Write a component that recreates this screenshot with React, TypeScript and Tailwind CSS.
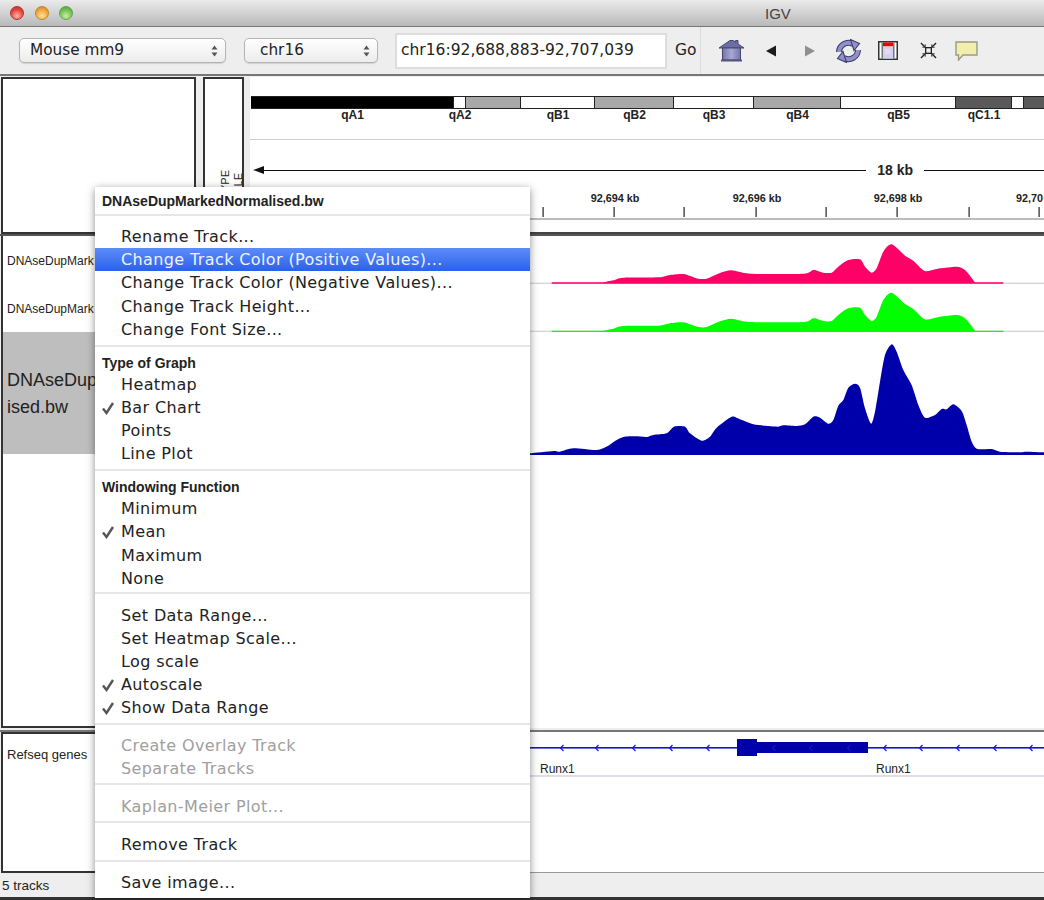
import React from 'react';

const LUCIDA = 'font-["DejaVu_Sans",sans-serif]';
const ARIAL = 'font-["Liberation_Sans",Arial,sans-serif]';

// coverage curves, traced in 3x coordinates of the track area
const peakCurve: number[][] = [
  [250, 142], [280, 136], [310, 128], [415, 127], [450, 120], [490, 117], [510, 123], [535, 131], [560, 131], [600, 114], [635, 106], [690, 116], [850, 116], [880, 105], [910, 113], [935, 113], [955, 95], [985, 75], [1020, 73], [1035, 95], [1055, 113], [1070, 100], [1090, 50], [1115, 28], [1155, 62], [1180, 77], [1215, 108], [1260, 100], [1310, 95], [1335, 105], [1365, 142],
];
const blueCurve: number[][] = [
  [30, 655], [100, 648], [120, 650], [160, 640], [230, 645], [265, 632], [285, 618], [310, 606], [345, 604], [380, 606], [400, 600], [440, 595], [462, 575], [495, 575], [510, 595], [545, 617], [570, 605], [590, 578], [635, 545], [660, 553], [700, 568], [745, 573], [775, 575], [790, 571], [830, 573], [855, 568], [880, 545], [900, 548], [925, 566], [940, 555], [955, 512], [970, 495], [985, 458], [1005, 446], [1020, 458], [1035, 520], [1053, 566], [1065, 530], [1080, 440], [1095, 360], [1115, 328], [1130, 350], [1150, 405], [1175, 450], [1195, 510], [1215, 548], [1245, 540], [1265, 522], [1280, 523], [1300, 508], [1325, 528], [1340, 570], [1355, 620], [1372, 642], [1415, 642], [1440, 650], [1500, 652], [1520, 650], [1572, 652],
];

// smooth line through the traced points
function smooth(pts: number[][]) {
  let d = `L${pts[0][0]} ${pts[0][1]}`;
  for (let i = 0; i < pts.length - 1; i++) {
    const p0 = pts[Math.max(i - 1, 0)];
    const p1 = pts[i];
    const p2 = pts[i + 1];
    const p3 = pts[Math.min(i + 2, pts.length - 1)];
    const c1x = p1[0] + (p2[0] - p0[0]) / 8;
    const c1y = p1[1] + (p2[1] - p0[1]) / 8;
    const c2x = p2[0] - (p3[0] - p1[0]) / 8;
    const c2y = p2[1] - (p3[1] - p1[1]) / 8;
    d += ` C${c1x} ${c1y} ${c2x} ${c2y} ${p2[0]} ${p2[1]}`;
  }
  return d;
}

const peakPath = `M95 146 L95 142 ${smooth(peakCurve)} L1450 142 L1450 146 Z`;
const bluePath = `M30 660 ${smooth(blueCurve)} L1572 660 Z`;

const bands = [
  { w: 'w-[203px]', bg: 'bg-black', label: 'qA1' },
  { w: 'w-[12px]', bg: 'bg-white', label: 'qA2' },
  { w: 'w-[55px]', bg: 'bg-[#a8a8a8]', label: '' },
  { w: 'w-[74px]', bg: 'bg-white', label: 'qB1' },
  { w: 'w-[79px]', bg: 'bg-[#a8a8a8]', label: 'qB2' },
  { w: 'w-[80px]', bg: 'bg-white', label: 'qB3' },
  { w: 'w-[87px]', bg: 'bg-[#a8a8a8]', label: 'qB4' },
  { w: 'w-[115px]', bg: 'bg-white', label: 'qB5' },
  { w: 'w-[56px]', bg: 'bg-[#595959]', label: 'qC1.1' },
  { w: 'w-[12px]', bg: 'bg-white', label: '' },
  { w: 'w-[21px]', bg: 'bg-[#595959]', label: '' },
];

type Item = { text: string; checked?: boolean; active?: boolean; disabled?: boolean };
type Section = { cls: string; headerCls?: string; header?: string; items: Item[] };

const sections: Section[] = [
  {
    cls: 'pt-[8.5px] pb-[4.5px]',
    items: [
      { text: 'Rename Track...' },
      { text: 'Change Track Color (Positive Values)...', active: true },
      { text: 'Change Track Color (Negative Values)...' },
      { text: 'Change Track Height...' },
      { text: 'Change Font Size...' },
    ],
  },
  {
    cls: 'pt-[6px] pb-[4px]',
    headerCls: 'h-[19px]',
    header: 'Type of Graph',
    items: [{ text: 'Heatmap' }, { text: 'Bar Chart', checked: true }, { text: 'Points' }, { text: 'Line Plot' }],
  },
  {
    cls: 'pt-[6px] pb-[3px]',
    headerCls: 'h-[20px]',
    header: 'Windowing Function',
    items: [{ text: 'Minimum' }, { text: 'Mean', checked: true }, { text: 'Maximum' }, { text: 'None' }],
  },
  {
    cls: 'pt-[8.5px] pb-[4.5px]',
    items: [
      { text: 'Set Data Range...' },
      { text: 'Set Heatmap Scale...' },
      { text: 'Log scale' },
      { text: 'Autoscale', checked: true },
      { text: 'Show Data Range', checked: true },
    ],
  },
  {
    cls: 'pt-[8px] pb-[3.5px]',
    items: [
      { text: 'Create Overlay Track', disabled: true },
      { text: 'Separate Tracks', disabled: true },
    ],
  },
  { cls: 'pt-[9px] pb-[3.5px]', items: [{ text: 'Kaplan-Meier Plot...', disabled: true }] },
  { cls: 'pt-[9px] pb-[4.5px]', items: [{ text: 'Remove Track' }] },
  { cls: 'pt-[8.5px] pb-[4.5px]', items: [{ text: 'Save image...' }] },
];

function Stepper() {
  return (
    <svg width="7" height="12" viewBox="0 0 7 12" className="shrink-0">
      <path d="M3.5 0.5 L6.5 4.5 H0.5 Z M3.5 11.5 L0.5 7.5 H6.5 Z" fill="#555" />
    </svg>
  );
}

function Select({ cls, label }: { cls: string; label: string }) {
  return (
    <div className={`${cls} h-[25px] flex items-center justify-between rounded-[5px] border border-[#b4b4b4] bg-gradient-to-b from-white to-[#ececec] shadow-[0_1px_1px_rgba(0,0,0,0.12)] text-[15.3px] text-[#222]`}>
      <span>{label}</span>
      <Stepper />
    </div>
  );
}

function ToolbarIcons() {
  return (
    <div className="flex items-center ml-[17px] gap-[15px]">
      <svg width="27" height="23" viewBox="0 0 27 23">
        <defs>
          <linearGradient id="houseBody" x1="0" y1="0" x2="1" y2="0">
            <stop offset="0" stopColor="#7474ac" />
            <stop offset="0.5" stopColor="#a8a8d4" />
            <stop offset="1" stopColor="#7474ac" />
          </linearGradient>
        </defs>
        <path d="M1 9 L12 1.5 H15 L17.5 3 V1.5 H20 V5 L26 9 Z" fill="#6d6da6" stroke="#46466e" />
        <rect x="4.5" y="9" width="18" height="12" fill="url(#houseBody)" stroke="#46466e" />
        <rect x="3" y="20.5" width="21" height="2" fill="#55557f" />
      </svg>
      <svg width="24" height="24" viewBox="0 0 24 24" className="-ml-[1px]">
        <path d="M7 12 L17 6.5 V17.5 Z" fill="#1c1c1c" />
      </svg>
      <svg width="24" height="24" viewBox="0 0 24 24">
        <path d="M17 12 L7 6.5 V17.5 Z" fill="#8f8f8f" />
      </svg>
      <svg width="27" height="24" viewBox="0 0 27 24" className="-ml-[2px]">
        <g>
          <path d="M4 13 A9.5 9.5 0 0 1 18 5" fill="none" stroke="#3c3c64" strokeWidth="6" />
          <path d="M4 13 A9.5 9.5 0 0 1 18 5" fill="none" stroke="#9090cc" strokeWidth="4" />
          <path d="M15.5 0.5 L24.5 4.5 L19 11.5 Z" fill="#9090cc" stroke="#3c3c64" strokeWidth="1.1" />
        </g>
        <g transform="rotate(180 13.5 12)">
          <path d="M4 13 A9.5 9.5 0 0 1 18 5" fill="none" stroke="#3c3c64" strokeWidth="6" />
          <path d="M4 13 A9.5 9.5 0 0 1 18 5" fill="none" stroke="#9090cc" strokeWidth="4" />
          <path d="M15.5 0.5 L24.5 4.5 L19 11.5 Z" fill="#9090cc" stroke="#3c3c64" strokeWidth="1.1" />
        </g>
      </svg>
      <svg width="20" height="19" viewBox="0 0 20 19" className="ml-[1px]">
        <rect x="0.75" y="0.75" width="18.5" height="17.5" fill="#ffffff" stroke="#333" strokeWidth="1.5" />
        <rect x="5" y="1.5" width="10" height="4" fill="#f00000" />
        <rect x="5" y="5.5" width="10" height="12" fill="#cfd2f2" />
        <rect x="7" y="8" width="5" height="5" fill="#f0d8e4" />
        <rect x="3.5" y="1.5" width="1.5" height="16" fill="#777" />
        <rect x="15" y="1.5" width="1.5" height="16" fill="#777" />
      </svg>
      <svg width="17" height="17" viewBox="0 0 18 18" className="ml-[7px]">
        <rect x="6" y="6" width="6" height="6" fill="none" stroke="#222" strokeWidth="1.4" />
        <path d="M1 1 L5 5 M17 1 L13 5 M1 17 L5 13 M17 17 L13 13" stroke="#222" strokeWidth="1.4" />
        <path d="M5.5 2.5 V5.5 H2.5 M12.5 2.5 V5.5 H15.5 M5.5 15.5 V12.5 H2.5 M12.5 15.5 V12.5 H15.5" stroke="#222" fill="none" />
      </svg>
      <svg width="23" height="20" viewBox="0 0 23 20" className="ml-[3px]">
        <path d="M1 1 H22 V14 H8 L3.5 19 V14 H1 Z" fill="#f2efae" stroke="#9a9a86" strokeWidth="1.4" />
      </svg>
    </div>
  );
}

function Area({ top, height, d, fill, dy = 0, baseline }: { top: number; height: number; d: string; fill: string; dy?: number; baseline: string }) {
  return (
    <svg width="794" height={height} viewBox={`-810 ${(top - 235) * 3} 2382 ${height * 3}`} className="block">
      <rect x="-810" y={(top - 235 + height) * 3 - 4} width="2382" height="4" fill={baseline} />
      <path d={d} fill={fill} transform={`translate(0 ${dy})`} />
    </svg>
  );
}

function Ruler() {
  const ticks = [543, 614, 684, 756, 826, 897, 969, 1039];
  const labels = [
    { x: 615, t: '92,694 kb' },
    { x: 757, t: '92,696 kb' },
    { x: 898, t: '92,698 kb' },
    { x: 1040, t: '92,70' },
  ];
  return (
    <svg width="794" height="32" viewBox="250 188 794 32" className="block">
      {labels.map((l) => (
        <text key={l.x} x={l.x} y="201.5" textAnchor={l.t.length > 5 ? 'middle' : 'start'} dx={l.t.length > 5 ? 0 : -24} fontFamily="Liberation Sans" fontWeight="700" fontSize="10.8" fill="#222">
          {l.t}
        </text>
      ))}
      {ticks.map((x) => (
        <rect key={x} x={x - 0.5} y="207" width="1.2" height="10" fill="#222" />
      ))}
      <rect x="250" y="218.5" width="794" height="1" fill="#777" />
    </svg>
  );
}

function GeneTrack() {
  const arrows = [562, 597, 634, 671, 708, 885, 921, 958, 995, 1031];
  const inner = [774, 811, 849];
  return (
    <svg width="794" height="50" viewBox="250 732 794 50" className="block">
      <rect x="250" y="747" width="794" height="1.6" fill="#1414cc" />
      {arrows.map((x) => (
        <path key={x} d={`M${x + 1.5} 745 L${x - 1.5} 748 L${x + 1.5} 751`} fill="none" stroke="#1414ee" strokeWidth="1.2" />
      ))}
      <rect x="737" y="739" width="20" height="17" fill="#0000aa" />
      <rect x="757" y="742" width="111" height="11" fill="#0000aa" />
      {inner.map((x) => (
        <path key={x} d={`M${x + 1.5} 745 L${x - 1.5} 748 L${x + 1.5} 751`} fill="none" stroke="#2222dd" strokeWidth="1" />
      ))}
      <text x="540" y="772.5" fontFamily="Liberation Sans" fontSize="12" fill="#222">Runx1</text>
      <text x="876" y="772.5" fontFamily="Liberation Sans" fontSize="12" fill="#222">Runx1</text>
    </svg>
  );
}

function PopupMenu() {
  return (
    <div className={`absolute left-[95px] top-[187px] w-[435px] h-[711px] bg-white shadow-[0_2px_8px_rgba(0,0,0,0.45)] ${LUCIDA}`}>
      <div className={`h-[27px] pt-[2px] flex items-center pl-[7px] text-[14px] font-bold text-[#222] ${ARIAL}`}>DNAseDupMarkedNormalised.bw</div>
      {sections.map((s, i) => (
        <div key={i} className={`border-t-2 border-[#e6e6e6] ${s.cls}`}>
          {s.header && <div className={`${s.headerCls} pt-[2px] flex items-center pl-[7px] text-[14px] font-bold text-[#222] ${ARIAL}`}>{s.header}</div>}
          {s.items.map((it) => (
            <div
              key={it.text}
              className={`relative h-[23.2px] pt-[2px] flex items-center pl-[26px] text-[16px] tracking-[0.38px] whitespace-nowrap ${
                it.active ? 'bg-gradient-to-b from-[#5c8cf7] to-[#2a60ee] text-[#eef3ff]' : it.disabled ? 'text-[#a0a0a0]' : 'text-[#222]'
              }`}
            >
              {it.checked && (
                <svg width="14" height="14" viewBox="0 0 14 14" className="absolute left-[6px]">
                  <path d="M2 7.5 L5.5 12 L12 2" fill="none" stroke="#555" strokeWidth="2.4" />
                </svg>
              )}
              {it.text}
            </div>
          ))}
        </div>
      ))}
    </div>
  );
}

export default function App() {
  return (
    <div className={`relative w-[1044px] h-[900px] overflow-hidden flex flex-col bg-[#eeeeee] ${ARIAL}`}>
      {/* window title */}
      <div className="relative h-[27px] pt-[2px] shrink-0 flex items-center pl-[765px] bg-gradient-to-b from-[#ebebeb] to-[#b9b9b9] border-b border-[#777] text-[15px] text-[#444]">
        <div className="absolute left-[10px] top-[6px] flex gap-[10.5px]">
          <div className="w-[14px] h-[14px] rounded-full border border-[#a33] bg-[radial-gradient(circle_at_50%_75%,#ffb0a0,#e2433c_60%,#b8302a)]" />
          <div className="w-[14px] h-[14px] rounded-full border border-[#b82] bg-[radial-gradient(circle_at_50%_75%,#ffe19a,#eda53a_60%,#c9852a)]" />
          <div className="w-[14px] h-[14px] rounded-full border border-[#5a5] bg-[radial-gradient(circle_at_50%_75%,#c8f0a0,#74bb50_60%,#4f9a3c)]" />
        </div>
        IGV
      </div>

      {/* toolbar */}
      <div className={`h-[49px] shrink-0 flex items-stretch border-b-2 border-[#777] ${LUCIDA}`}>
        <div className="flex items-center w-[701px] border-r border-[#dcdcdc]">
          <Select cls="ml-[19px] w-[207px] pl-[10px] pr-[7px]" label="Mouse mm9" />
          <Select cls="ml-[18px] w-[134px] pl-[15px] pr-[7px]" label="chr16" />
          <div className="ml-[17px] w-[272px] h-[36px] flex items-center pl-[4px] border-2 border-[#dddddd] bg-white text-[15.5px] text-[#222] whitespace-nowrap">chr16:92,688,883-92,707,039</div>
          <span className="ml-[8px] text-[15.5px] text-[#222]">Go</span>
        </div>
        <ToolbarIcons />
      </div>

      {/* header panel */}
      <div className="h-[157px] shrink-0 flex mt-px">
        <div className="ml-px w-[195px] border-2 border-[#333] bg-white" />
        <div className="ml-[7px] w-[41px] border-2 border-[#333] bg-white flex justify-end items-end gap-[2px] pb-[33px] overflow-hidden text-[11px] leading-none text-[#222]">
          <span className="[writing-mode:vertical-rl] rotate-180">TYPE</span>
          <span className="[writing-mode:vertical-rl] rotate-180 mb-[3px] mr-[-2px]">FILE</span>
        </div>
        <div className="ml-[6px] flex-1 bg-white flex flex-col border-b-2 border-[#444] overflow-hidden">
          <div className="mt-[19px] ml-px flex items-start">
            {bands.map((b, i) => (
              <div key={i} className={`${b.w} shrink-0 flex flex-col items-center`}>
                <div className={`w-full h-[13px] border-y border-[#222] border-r ${b.bg}`} />
                <span className="-mt-px h-[14px] text-[12px] leading-[14px] font-bold text-[#222] whitespace-nowrap">{b.label}</span>
              </div>
            ))}
          </div>
          <div className="mt-[17px] h-px bg-[#cfcfcf]" />
          <div className="mt-[20px] h-[20px] flex items-center pl-[3px]">
            <svg width="11" height="8" viewBox="0 0 11 8" className="shrink-0"><path d="M0 4 L11 0 V8 Z" fill="#111" /></svg>
            <div className="flex-1 h-px bg-[#111]" />
            <span className="mx-[11px] text-[14px] font-bold text-[#222]">18 kb</span>
            <div className="w-[120px] h-px bg-[#111]" />
          </div>
          <div className="mt-[8px]"><Ruler /></div>
        </div>
      </div>

      {/* data panel */}
      <div className="h-[494px] shrink-0 flex border-t-2 border-[#555]">
        <div className="ml-px w-[195px] border-x-2 border-b-2 border-[#333] bg-white flex flex-col text-[12px] text-[#222]">
          <div className="h-[48px] pt-[2px] flex items-center pl-[4px] whitespace-nowrap">DNAseDupMark</div>
          <div className="h-[48px] pt-[2px] flex items-center pl-[4px] whitespace-nowrap">DNAseDupMark</div>
          <div className="h-[122px] pt-[1px] flex flex-col justify-center pl-[4px] bg-[#bebebe] text-[18px] leading-[27px]">
            <span>DNAseDup</span>
            <span>ised.bw</span>
          </div>
        </div>
        <div className="ml-[7px] w-[41px] border-x-2 border-b-2 border-[#333] bg-white" />
        <div className="ml-[6px] flex-1 bg-white">
          <Area top={236} height={48} d={peakPath} fill="#ff0066" baseline="#d4d4d4" />
          <Area top={284} height={48} d={peakPath} fill="#00ff00" dy={145} baseline="#d4d4d4" />
          <Area top={332} height={123} d={bluePath} fill="#0000aa" baseline="#c8c8e8" />
        </div>
      </div>

      {/* feature panel */}
      <div className="h-[143px] shrink-0 flex mt-[2px] border-t-2 border-[#777]">
        <div className="ml-px w-[195px] border-2 border-[#333] bg-white pl-[4px] pt-[11px] text-[13px] text-[#222]">Refseq genes</div>
        <div className="ml-[7px] w-[41px] border-2 border-[#333] bg-white" />
        <div className="ml-[6px] flex-1 bg-white border-b border-[#999]">
          <GeneTrack />
          <div className="mt-[-7px] h-[2px] bg-[#dedee8]" />
        </div>
      </div>

      {/* status bar */}
      <div className="h-[24px] pt-[2px] shrink-0 flex items-center pl-[2px] text-[13.5px] text-[#222]">5 tracks</div>
      <div className="flex-1 bg-[#333]" />

      <PopupMenu />
    </div>
  );
}
